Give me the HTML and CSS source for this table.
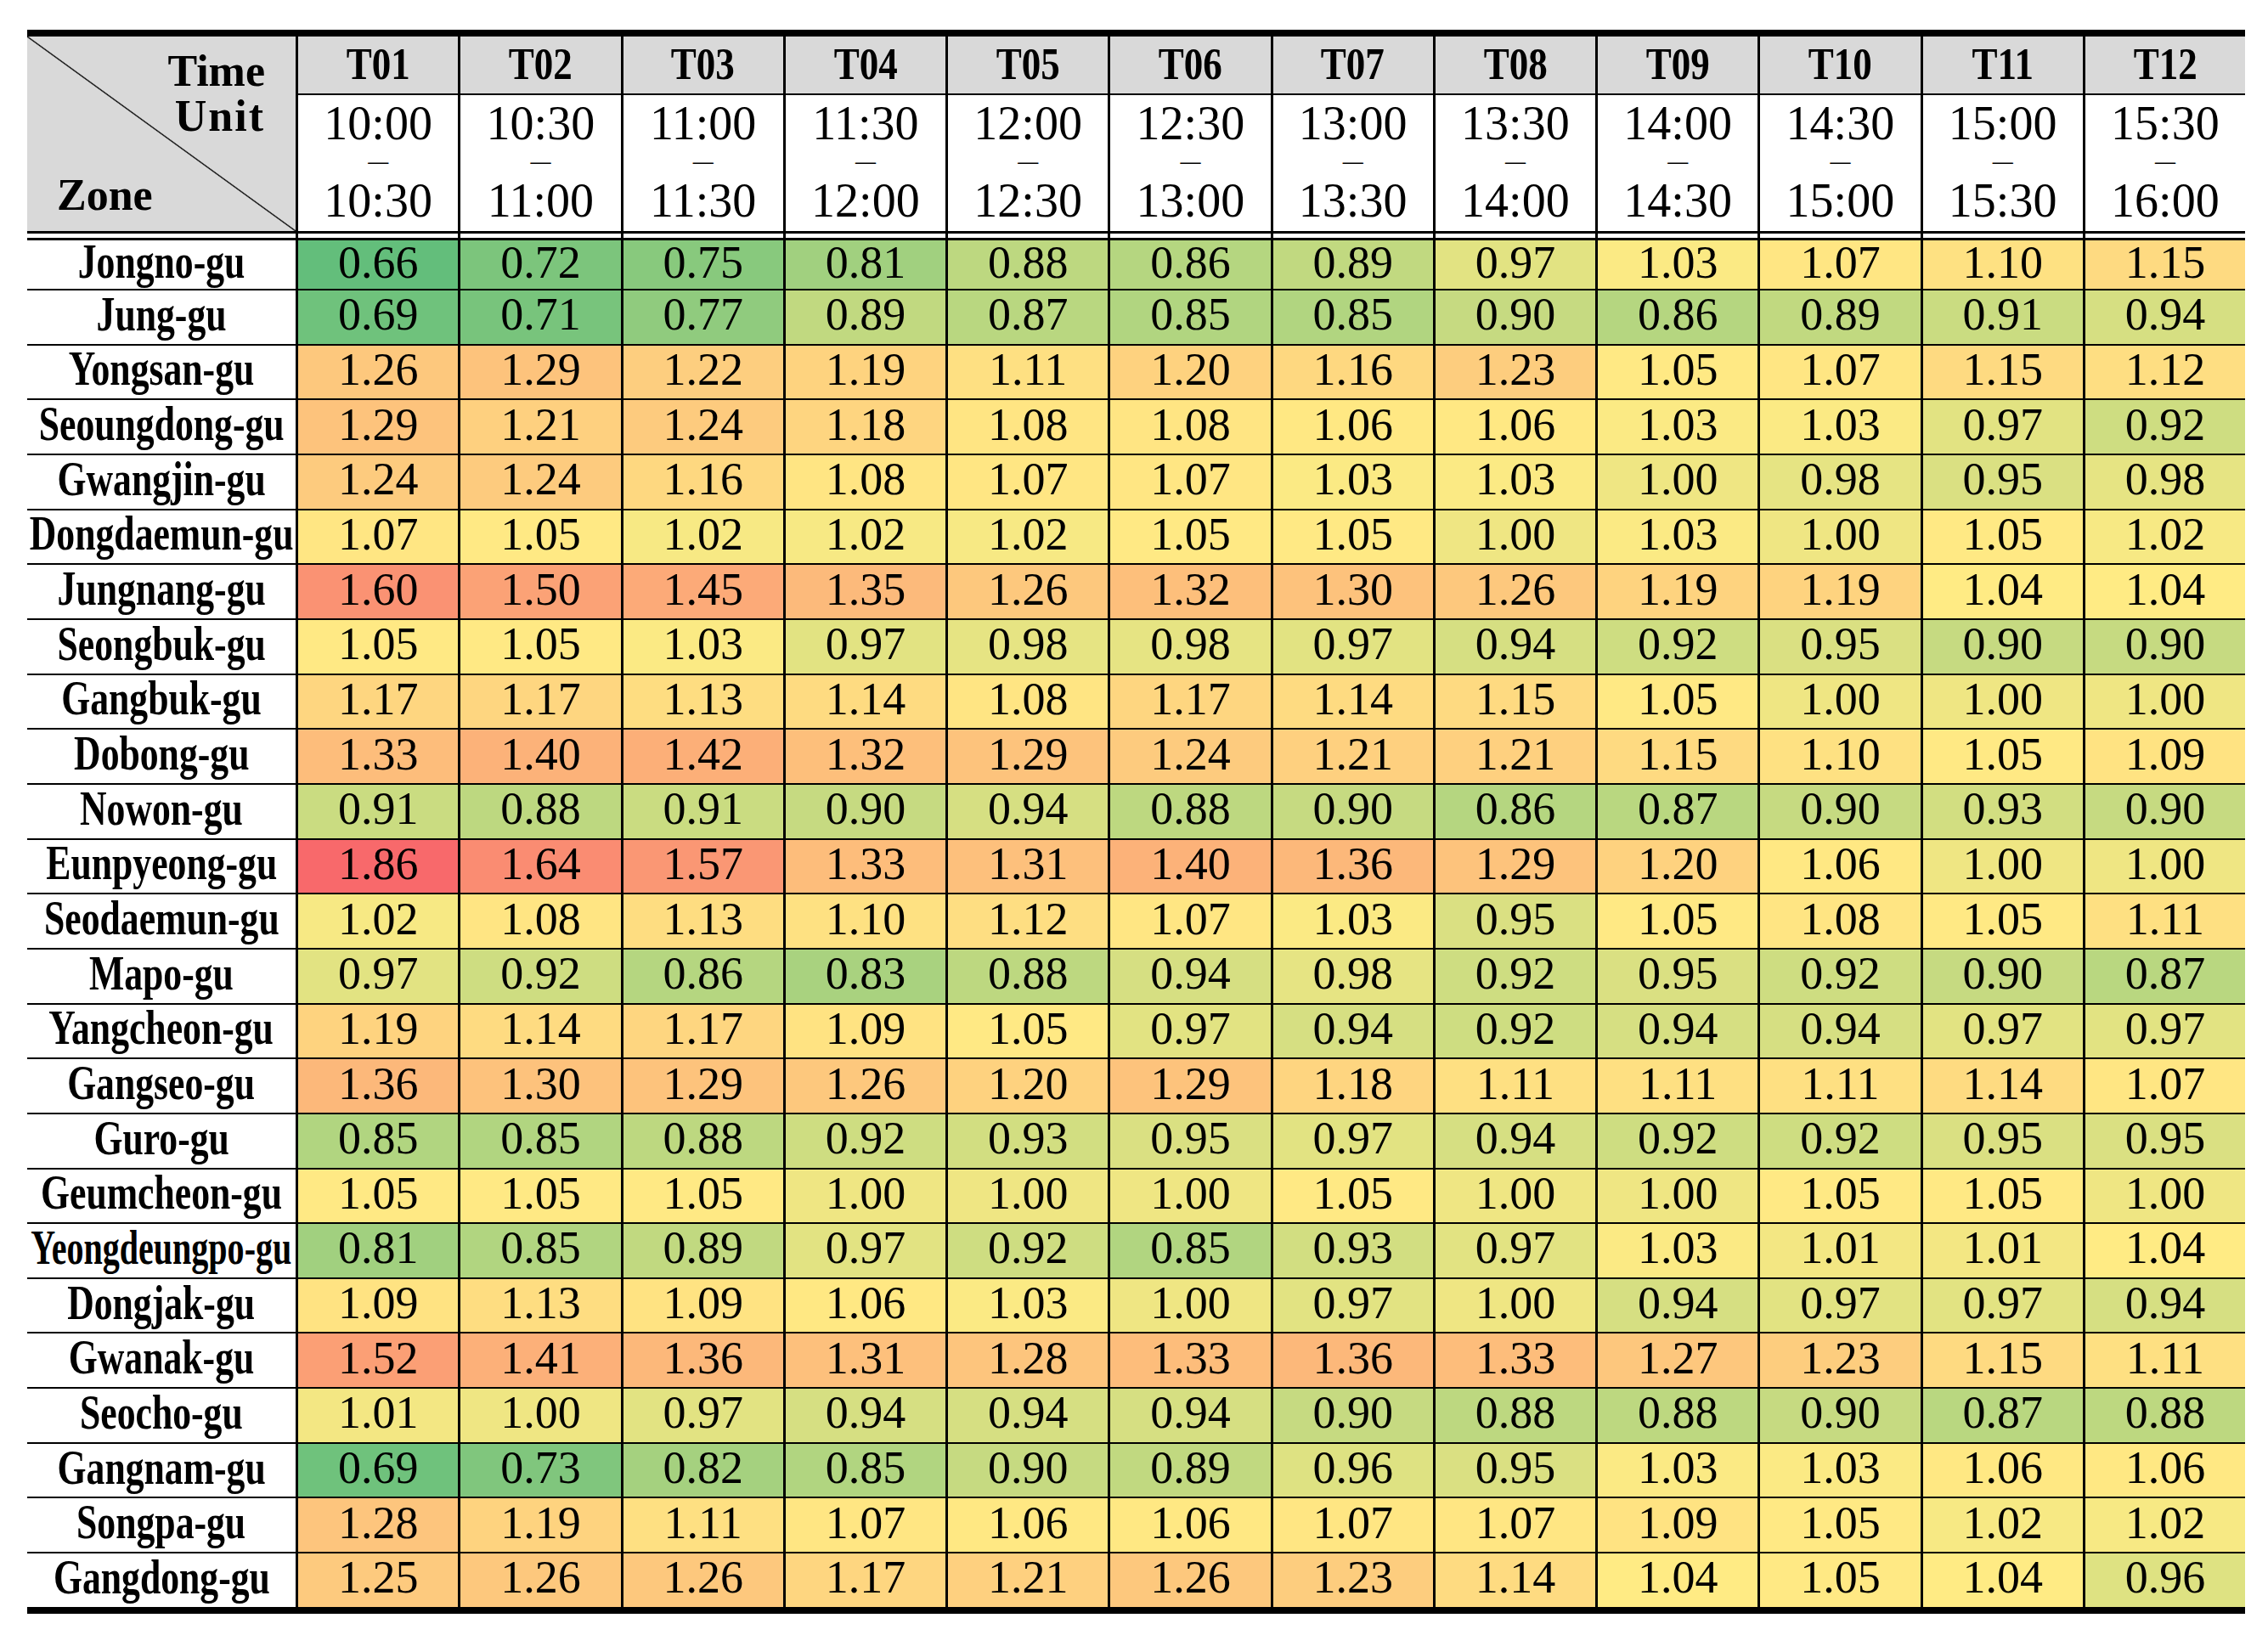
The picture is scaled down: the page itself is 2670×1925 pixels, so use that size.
FILE: index.html
```html
<!DOCTYPE html>
<html lang="en">
<head>
<meta charset="utf-8">
<title>Zone / Time Unit ratio table</title>
<link rel="stylesheet" href="styles.css">
<script src="script.js" defer></script>
</head>
<body>
<div class="sheet">
  <div class="row head">
    <div class="corner"><span class="c-time">Time</span><span class="c-unit">Unit</span><span class="c-zone">Zone</span></div>
    <div class="tid"><span>T01</span></div><div class="tid"><span>T02</span></div><div class="tid"><span>T03</span></div><div class="tid"><span>T04</span></div><div class="tid"><span>T05</span></div><div class="tid"><span>T06</span></div><div class="tid"><span>T07</span></div><div class="tid"><span>T08</span></div><div class="tid"><span>T09</span></div><div class="tid"><span>T10</span></div><div class="tid"><span>T11</span></div><div class="tid"><span>T12</span></div>
  </div>
  <div class="row times">
    <div class="span"><span class="t">10:00</span><span class="dash">—</span><span class="t">10:30</span></div>
    <div class="span"><span class="t">10:30</span><span class="dash">—</span><span class="t">11:00</span></div>
    <div class="span"><span class="t">11:00</span><span class="dash">—</span><span class="t">11:30</span></div>
    <div class="span"><span class="t">11:30</span><span class="dash">—</span><span class="t">12:00</span></div>
    <div class="span"><span class="t">12:00</span><span class="dash">—</span><span class="t">12:30</span></div>
    <div class="span"><span class="t">12:30</span><span class="dash">—</span><span class="t">13:00</span></div>
    <div class="span"><span class="t">13:00</span><span class="dash">—</span><span class="t">13:30</span></div>
    <div class="span"><span class="t">13:30</span><span class="dash">—</span><span class="t">14:00</span></div>
    <div class="span"><span class="t">14:00</span><span class="dash">—</span><span class="t">14:30</span></div>
    <div class="span"><span class="t">14:30</span><span class="dash">—</span><span class="t">15:00</span></div>
    <div class="span"><span class="t">15:00</span><span class="dash">—</span><span class="t">15:30</span></div>
    <div class="span"><span class="t">15:30</span><span class="dash">—</span><span class="t">16:00</span></div>
  </div>
  <div class="row first"><div class="zone"><span>Jongno-gu</span></div><div class="v">0.66</div><div class="v">0.72</div><div class="v">0.75</div><div class="v">0.81</div><div class="v">0.88</div><div class="v">0.86</div><div class="v">0.89</div><div class="v">0.97</div><div class="v">1.03</div><div class="v">1.07</div><div class="v">1.10</div><div class="v">1.15</div></div>
  <div class="row"><div class="zone"><span>Jung-gu</span></div><div class="v">0.69</div><div class="v">0.71</div><div class="v">0.77</div><div class="v">0.89</div><div class="v">0.87</div><div class="v">0.85</div><div class="v">0.85</div><div class="v">0.90</div><div class="v">0.86</div><div class="v">0.89</div><div class="v">0.91</div><div class="v">0.94</div></div>
  <div class="row"><div class="zone"><span>Yongsan-gu</span></div><div class="v">1.26</div><div class="v">1.29</div><div class="v">1.22</div><div class="v">1.19</div><div class="v">1.11</div><div class="v">1.20</div><div class="v">1.16</div><div class="v">1.23</div><div class="v">1.05</div><div class="v">1.07</div><div class="v">1.15</div><div class="v">1.12</div></div>
  <div class="row"><div class="zone"><span>Seoungdong-gu</span></div><div class="v">1.29</div><div class="v">1.21</div><div class="v">1.24</div><div class="v">1.18</div><div class="v">1.08</div><div class="v">1.08</div><div class="v">1.06</div><div class="v">1.06</div><div class="v">1.03</div><div class="v">1.03</div><div class="v">0.97</div><div class="v">0.92</div></div>
  <div class="row"><div class="zone"><span>Gwangjin-gu</span></div><div class="v">1.24</div><div class="v">1.24</div><div class="v">1.16</div><div class="v">1.08</div><div class="v">1.07</div><div class="v">1.07</div><div class="v">1.03</div><div class="v">1.03</div><div class="v">1.00</div><div class="v">0.98</div><div class="v">0.95</div><div class="v">0.98</div></div>
  <div class="row"><div class="zone"><span>Dongdaemun-gu</span></div><div class="v">1.07</div><div class="v">1.05</div><div class="v">1.02</div><div class="v">1.02</div><div class="v">1.02</div><div class="v">1.05</div><div class="v">1.05</div><div class="v">1.00</div><div class="v">1.03</div><div class="v">1.00</div><div class="v">1.05</div><div class="v">1.02</div></div>
  <div class="row"><div class="zone"><span>Jungnang-gu</span></div><div class="v">1.60</div><div class="v">1.50</div><div class="v">1.45</div><div class="v">1.35</div><div class="v">1.26</div><div class="v">1.32</div><div class="v">1.30</div><div class="v">1.26</div><div class="v">1.19</div><div class="v">1.19</div><div class="v">1.04</div><div class="v">1.04</div></div>
  <div class="row"><div class="zone"><span>Seongbuk-gu</span></div><div class="v">1.05</div><div class="v">1.05</div><div class="v">1.03</div><div class="v">0.97</div><div class="v">0.98</div><div class="v">0.98</div><div class="v">0.97</div><div class="v">0.94</div><div class="v">0.92</div><div class="v">0.95</div><div class="v">0.90</div><div class="v">0.90</div></div>
  <div class="row"><div class="zone"><span>Gangbuk-gu</span></div><div class="v">1.17</div><div class="v">1.17</div><div class="v">1.13</div><div class="v">1.14</div><div class="v">1.08</div><div class="v">1.17</div><div class="v">1.14</div><div class="v">1.15</div><div class="v">1.05</div><div class="v">1.00</div><div class="v">1.00</div><div class="v">1.00</div></div>
  <div class="row"><div class="zone"><span>Dobong-gu</span></div><div class="v">1.33</div><div class="v">1.40</div><div class="v">1.42</div><div class="v">1.32</div><div class="v">1.29</div><div class="v">1.24</div><div class="v">1.21</div><div class="v">1.21</div><div class="v">1.15</div><div class="v">1.10</div><div class="v">1.05</div><div class="v">1.09</div></div>
  <div class="row"><div class="zone"><span>Nowon-gu</span></div><div class="v">0.91</div><div class="v">0.88</div><div class="v">0.91</div><div class="v">0.90</div><div class="v">0.94</div><div class="v">0.88</div><div class="v">0.90</div><div class="v">0.86</div><div class="v">0.87</div><div class="v">0.90</div><div class="v">0.93</div><div class="v">0.90</div></div>
  <div class="row"><div class="zone"><span>Eunpyeong-gu</span></div><div class="v">1.86</div><div class="v">1.64</div><div class="v">1.57</div><div class="v">1.33</div><div class="v">1.31</div><div class="v">1.40</div><div class="v">1.36</div><div class="v">1.29</div><div class="v">1.20</div><div class="v">1.06</div><div class="v">1.00</div><div class="v">1.00</div></div>
  <div class="row"><div class="zone"><span>Seodaemun-gu</span></div><div class="v">1.02</div><div class="v">1.08</div><div class="v">1.13</div><div class="v">1.10</div><div class="v">1.12</div><div class="v">1.07</div><div class="v">1.03</div><div class="v">0.95</div><div class="v">1.05</div><div class="v">1.08</div><div class="v">1.05</div><div class="v">1.11</div></div>
  <div class="row"><div class="zone"><span>Mapo-gu</span></div><div class="v">0.97</div><div class="v">0.92</div><div class="v">0.86</div><div class="v">0.83</div><div class="v">0.88</div><div class="v">0.94</div><div class="v">0.98</div><div class="v">0.92</div><div class="v">0.95</div><div class="v">0.92</div><div class="v">0.90</div><div class="v">0.87</div></div>
  <div class="row"><div class="zone"><span>Yangcheon-gu</span></div><div class="v">1.19</div><div class="v">1.14</div><div class="v">1.17</div><div class="v">1.09</div><div class="v">1.05</div><div class="v">0.97</div><div class="v">0.94</div><div class="v">0.92</div><div class="v">0.94</div><div class="v">0.94</div><div class="v">0.97</div><div class="v">0.97</div></div>
  <div class="row"><div class="zone"><span>Gangseo-gu</span></div><div class="v">1.36</div><div class="v">1.30</div><div class="v">1.29</div><div class="v">1.26</div><div class="v">1.20</div><div class="v">1.29</div><div class="v">1.18</div><div class="v">1.11</div><div class="v">1.11</div><div class="v">1.11</div><div class="v">1.14</div><div class="v">1.07</div></div>
  <div class="row"><div class="zone"><span>Guro-gu</span></div><div class="v">0.85</div><div class="v">0.85</div><div class="v">0.88</div><div class="v">0.92</div><div class="v">0.93</div><div class="v">0.95</div><div class="v">0.97</div><div class="v">0.94</div><div class="v">0.92</div><div class="v">0.92</div><div class="v">0.95</div><div class="v">0.95</div></div>
  <div class="row"><div class="zone"><span>Geumcheon-gu</span></div><div class="v">1.05</div><div class="v">1.05</div><div class="v">1.05</div><div class="v">1.00</div><div class="v">1.00</div><div class="v">1.00</div><div class="v">1.05</div><div class="v">1.00</div><div class="v">1.00</div><div class="v">1.05</div><div class="v">1.05</div><div class="v">1.00</div></div>
  <div class="row"><div class="zone"><span class="tight">Yeongdeungpo-gu</span></div><div class="v">0.81</div><div class="v">0.85</div><div class="v">0.89</div><div class="v">0.97</div><div class="v">0.92</div><div class="v">0.85</div><div class="v">0.93</div><div class="v">0.97</div><div class="v">1.03</div><div class="v">1.01</div><div class="v">1.01</div><div class="v">1.04</div></div>
  <div class="row"><div class="zone"><span>Dongjak-gu</span></div><div class="v">1.09</div><div class="v">1.13</div><div class="v">1.09</div><div class="v">1.06</div><div class="v">1.03</div><div class="v">1.00</div><div class="v">0.97</div><div class="v">1.00</div><div class="v">0.94</div><div class="v">0.97</div><div class="v">0.97</div><div class="v">0.94</div></div>
  <div class="row"><div class="zone"><span>Gwanak-gu</span></div><div class="v">1.52</div><div class="v">1.41</div><div class="v">1.36</div><div class="v">1.31</div><div class="v">1.28</div><div class="v">1.33</div><div class="v">1.36</div><div class="v">1.33</div><div class="v">1.27</div><div class="v">1.23</div><div class="v">1.15</div><div class="v">1.11</div></div>
  <div class="row"><div class="zone"><span>Seocho-gu</span></div><div class="v">1.01</div><div class="v">1.00</div><div class="v">0.97</div><div class="v">0.94</div><div class="v">0.94</div><div class="v">0.94</div><div class="v">0.90</div><div class="v">0.88</div><div class="v">0.88</div><div class="v">0.90</div><div class="v">0.87</div><div class="v">0.88</div></div>
  <div class="row"><div class="zone"><span>Gangnam-gu</span></div><div class="v">0.69</div><div class="v">0.73</div><div class="v">0.82</div><div class="v">0.85</div><div class="v">0.90</div><div class="v">0.89</div><div class="v">0.96</div><div class="v">0.95</div><div class="v">1.03</div><div class="v">1.03</div><div class="v">1.06</div><div class="v">1.06</div></div>
  <div class="row"><div class="zone"><span>Songpa-gu</span></div><div class="v">1.28</div><div class="v">1.19</div><div class="v">1.11</div><div class="v">1.07</div><div class="v">1.06</div><div class="v">1.06</div><div class="v">1.07</div><div class="v">1.07</div><div class="v">1.09</div><div class="v">1.05</div><div class="v">1.02</div><div class="v">1.02</div></div>
  <div class="row"><div class="zone"><span>Gangdong-gu</span></div><div class="v">1.25</div><div class="v">1.26</div><div class="v">1.26</div><div class="v">1.17</div><div class="v">1.21</div><div class="v">1.26</div><div class="v">1.23</div><div class="v">1.14</div><div class="v">1.04</div><div class="v">1.05</div><div class="v">1.04</div><div class="v">0.96</div></div>
</div>
</body>
</html>
```

FILE: styles.css
```css
* { box-sizing: border-box; }

html, body {
  margin: 0;
  background: #fff;
}

body {
  padding: 35px 0 0 32px;
  font-family: "Liberation Serif", "Times New Roman", serif;
  color: #000;
}

.sheet {
  display: grid;
  width: 2611px;
  grid-template-columns: 316px repeat(12, 1fr);
  grid-template-rows: 67px 165px 65px repeat(24, 64.67px);
  column-gap: 3px;
  background: #000;
  border-top: 8px solid #000;
  border-bottom: 8px solid #000;
}

.row { display: contents; }

/* corner header cell with diagonal */
.corner {
  grid-row: span 2;
  display: flex;
  flex-direction: column;
  padding: 14px 36px 16px 35px;
  border-bottom: 3px solid #000;
  background:
    linear-gradient(to top right, transparent calc(50% - 1.3px), #000 50%, transparent calc(50% + 1.3px)),
    #d9d9d9;
  font-weight: bold;
  font-size: 52px;
  line-height: 53px;
}
.c-time, .c-unit { align-self: flex-end; }
.c-unit { letter-spacing: 2px; }
.c-zone { margin-top: auto; align-self: flex-start; }

.tid {
  display: flex;
  align-items: center;
  justify-content: center;
  padding-bottom: 3px;
  background: #d9d9d9;
  font-weight: bold;
  font-size: 53px;
  line-height: 1;
}
.tid span { display: inline-block; transform: scaleX(0.85); }

.span {
  display: flex;
  flex-direction: column;
  align-items: center;
  justify-content: center;
  padding-bottom: 4px;
  background: #fff;
  border-top: 2px solid #000;
  border-bottom: 3px solid #000;
}
.span .t {
  font-size: 56px;
  line-height: normal;
}
.span .dash {
  font-size: 24px;
  line-height: normal;
  font-weight: bold;
}

.zone, .v {
  display: flex;
  align-items: center;
  justify-content: center;
  border-top: 2px solid #000;
  white-space: nowrap;
}

.zone {
  background: #fff;
  padding-bottom: 7px;
  font-weight: bold;
  font-size: 56px;
  line-height: 1;
}
.zone span { display: inline-block; transform: scaleX(0.78); }
.zone span.tight { transform: scaleX(0.715); }

.v {
  background: #ffeb84;
  padding-bottom: 6px;
  font-size: 54px;
  line-height: 1;
}

.first > .zone,
.first > .v {
  border-top: 5px solid #fff;
  padding-top: 3px;
  box-shadow: inset 0 3px 0 #000;
}
```

FILE: script.js
```js
(function () {
  var cells = Array.prototype.slice.call(document.querySelectorAll('.v'));
  var vals = cells.map(function (c) { return parseFloat(c.textContent); });
  var sorted = vals.slice().sort(function (a, b) { return a - b; });
  var n = sorted.length;
  var min = sorted[0], max = sorted[n - 1];
  var pos = (n - 1) * 0.5, lo = Math.floor(pos), hi = Math.ceil(pos);
  var mid = sorted[lo] + (sorted[hi] - sorted[lo]) * (pos - lo);
  var green = [99, 190, 123], yellow = [255, 235, 132], red = [248, 105, 107];
  function mix(a, b, t) {
    return 'rgb(' + a.map(function (x, i) { return Math.round(x + (b[i] - x) * t); }).join(',') + ')';
  }
  cells.forEach(function (c, i) {
    var v = vals[i], col;
    if (v <= mid) col = mix(green, yellow, mid === min ? 1 : (v - min) / (mid - min));
    else col = mix(yellow, red, (v - mid) / (max - mid));
    c.style.backgroundColor = col;
  });
})();
```
